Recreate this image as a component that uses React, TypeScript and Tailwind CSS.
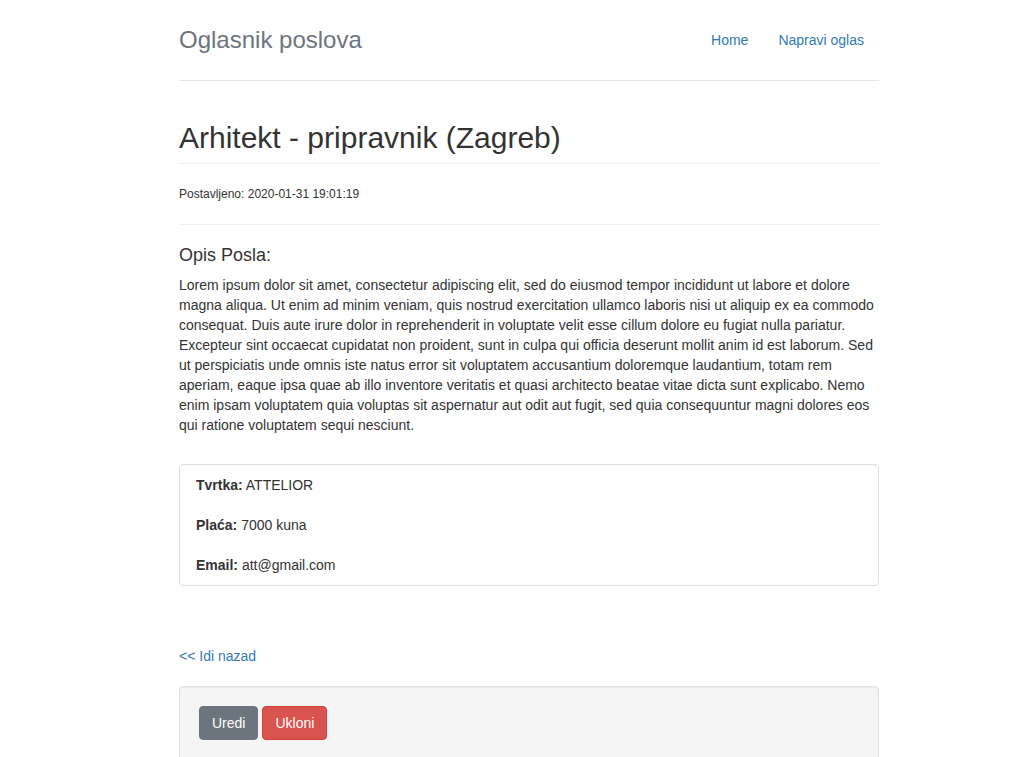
export default function App() {
  return (
    <div
      className="min-h-screen bg-white text-[14px] leading-[20px] text-[#333333]"
      style={{ fontFamily: '"Liberation Sans", Arial, Helvetica, sans-serif' }}
    >
      <div className="ml-[179px] w-[700px]">
        <header className="flex items-center justify-between border-b border-[#e5e5e5] pt-[20px] pb-[20px]">
          <h3 className="m-0 text-[24px] leading-[40px] text-[#6c757d]">Oglasnik poslova</h3>
          <nav className="flex">
            <a href="#" className="block px-[15px] py-[10px] text-[#337ab7]">Home</a>
            <a href="#" className="block px-[15px] py-[10px] text-[#337ab7]">Napravi oglas</a>
          </nav>
        </header>

        <div className="mt-[40px] mb-[20px] border-b border-[#eeeeee] pb-[9px]">
          <h1 className="text-[30px] leading-[33px] font-normal">Arhitekt - pripravnik (Zagreb)</h1>
        </div>

        <p className="text-[12px] leading-[20px]">Postavljeno: 2020-01-31 19:01:19</p>

        <hr className="mt-[20px] mb-[20px] border-0 border-t border-[#eeeeee]" />

        <h4 className="mb-[10px] text-[18px] leading-[20px]">Opis Posla:</h4>
        <p className="mb-[29px]">
          Lorem ipsum dolor sit amet, consectetur adipiscing elit, sed do eiusmod tempor incididunt ut labore et dolore
          magna aliqua. Ut enim ad minim veniam, quis nostrud exercitation ullamco laboris nisi ut aliquip ex ea commodo
          consequat. Duis aute irure dolor in reprehenderit in voluptate velit esse cillum dolore eu fugiat nulla pariatur.
          Excepteur sint occaecat cupidatat non proident, sunt in culpa qui officia deserunt mollit anim id est laborum. Sed
          ut perspiciatis unde omnis iste natus error sit voluptatem accusantium doloremque laudantium, totam rem
          aperiam, eaque ipsa quae ab illo inventore veritatis et quasi architecto beatae vitae dicta sunt explicabo. Nemo
          enim ipsam voluptatem quia voluptas sit aspernatur aut odit aut fugit, sed quia consequuntur magni dolores eos
          qui ratione voluptatem sequi nesciunt.
        </p>

        <div className="flex flex-col gap-[20px] rounded-[4px] border border-[#dddddd] px-[16px] py-[10px]">
          <p><b>Tvrtka:</b> ATTELIOR</p>
          <p><b>Plaća:</b> 7000 kuna</p>
          <p><b>Email:</b> att@gmail.com</p>
        </div>

        <div className="pt-[60px] pb-[20px]">
          <a href="#" className="text-[#337ab7]">&lt;&lt; Idi nazad</a>
        </div>

        <div className="flex gap-[4px] rounded-[4px] border border-[#e3e3e3] bg-[#f5f5f5] p-[19px] pb-[40px] shadow-[inset_0_1px_1px_rgba(0,0,0,0.05)]">
          <button className="h-[34px] rounded-[4px] border border-[#6c757d] bg-[#6c757d] px-[12px] text-[14px] text-white">
            Uredi
          </button>
          <button className="h-[34px] rounded-[4px] border border-[#d43f3a] bg-[#d9534f] px-[12px] text-[14px] text-white">
            Ukloni
          </button>
        </div>
      </div>
    </div>
  );
}
